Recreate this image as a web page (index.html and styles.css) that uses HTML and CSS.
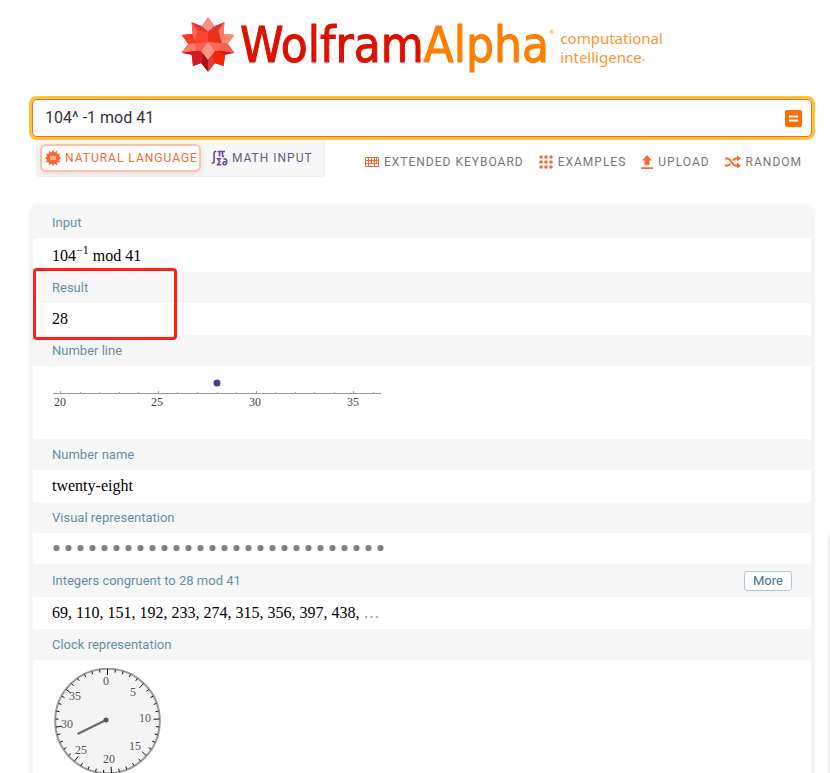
FILE: index.html
```html
<!DOCTYPE html>
<html lang="en">
<head>
<meta charset="utf-8">
<title>104^ -1 mod 41 - Wolfram|Alpha</title>
<link rel="stylesheet" href="styles.css">
</head>
<body>
<div class="page">
  <header class="brand">
    <svg class="spikey" viewBox="11 9 160 165" aria-hidden="true">
      <path fill="#e63322" d="M91 10 110 37 140 25 138 60 170 63 150 89 170 116 142 122 138 156 112 148 91 173 70 148 46 156 42 122 12 116 32 89 12 63 45 60 42 25 73 37Z"/>
      <path fill="#ff9082" d="M91 10 110 37 91 54 73 37Z"/>
      <path fill="#dc3a2c" d="M42 25 73 37 91 54 60 50Z"/>
      <path fill="#f76455" d="M42 25 60 50 52 84 45 60Z"/>
      <path fill="#dc3a2c" d="M140 25 110 37 91 54 122 50Z"/>
      <path fill="#ff7565" d="M140 25 122 50 131 84 138 60Z"/>
      <path fill="#ff4530" d="M60 50 91 54 91 83 52 88Z"/>
      <path fill="#e8301c" d="M122 50 91 54 91 83 131 88Z"/>
      <path fill="#fa3a22" d="M12 63 45 60 52 88 32 90Z"/>
      <path fill="#ff8a7a" d="M170 63 138 60 131 88 150 90Z"/>
      <path fill="#ff7a6a" d="M12 116 32 89 52 88 58 110Z"/>
      <path fill="#cc1824" d="M12 116 58 110 62 122 42 122Z"/>
      <path fill="#f56555" d="M170 116 150 89 131 88 124 110Z"/>
      <path fill="#d21818" d="M170 116 124 110 120 122 142 122Z"/>
      <path fill="#ff5f4c" d="M52 88 91 83 75 112 58 110Z"/>
      <path fill="#ff6a58" d="M131 88 91 83 107 112 124 110Z"/>
      <path fill="#ff9385" d="M91 83 111 112 91 139 71 112Z"/>
      <path fill="#d01c26" d="M46 156 42 122 58 110 71 112 76 126 72 146Z"/>
      <path fill="#f52208" d="M138 156 142 122 124 110 111 112 106 126 110 146Z"/>
      <path fill="#aa101a" d="M91 173 72 148 76 119 91 139Z"/>
      <path fill="#df3a35" d="M91 173 110 148 106 119 91 139Z"/>
    </svg>
    <div class="wordmark">Wolfram<span class="alpha">Alpha</span><sup class="reg">®</sup></div>
    <div class="tagline">computational<br>intelligence<span class="tm">™</span></div>
  </header>

  <main>
    <form class="search" onsubmit="return false">
      <input class="query" type="text" aria-label="Query" value="104^ -1 mod 41">
      <button class="compute" type="submit" aria-label="Compute">
        <svg viewBox="0 0 17 17" width="17" height="17"><rect width="17" height="17" rx="2" fill="#ff6f00"/><path d="M4 6.5h9M4 10.5h9" stroke="#fff" stroke-width="2"/></svg>
      </button>
    </form>

    <div class="toolbar">
      <div class="modes">
        <button class="mode mode-active" type="button">
          <svg viewBox="0 0 16 16" width="16" height="16" aria-hidden="true"><path fill="#f96932" d="M8 0l1.500 2.500L12 .8l.3 2.900 2.900.1-1.200 2.500L16 8l-2 1.700 1.200 2.500-2.900.1-.3 2.900-2.500-1.500L8 16l-1.500-2.300L4 15.200l-.3-2.900-2.900-.1L2 9.700 0 8l2-1.700L.8 3.800l2.900-.1L4 .8l2.500 1.700z"/><rect x="5" y="6" width="6" height="4" fill="#ffad8d"/></svg>
          NATURAL LANGUAGE
        </button>
        <button class="mode mode-math" type="button">
          <svg viewBox="0 0 17 16" width="17" height="16" aria-hidden="true"><g fill="none" stroke="#6b4f91" stroke-width="1.600"><path d="M5.200 1.700C3.800 1 3.100 1.700 3.100 3.200v8c0 1.800-1 2.200-2.500 1.500"/><path d="M6.500 1.500h7.500M8.500 1.500v5M11.500 1.500v4q0 1 1.500.8"/><path d="M10.200 8.800H6.700l2 3-2 3h3.500"/><path d="M12.500 9.300c2-1 3.500.2 3.300 2.400-.2 2-1 3-2.200 3-2 0-2-3 0-3q1.500 0 2 .8"/></g></svg>
          MATH INPUT
        </button>
      </div>
      <nav class="tools">
        <a class="tool" href="#"><svg viewBox="0 0 14 10" width="14" height="10" aria-hidden="true"><path fill="none" stroke="#f96932" d="M.5.500h13v9H.5zM.5 3.500h13M.5 6.500h13M3.500.500v9M6.500.500v6M9.500.500v9M11.500.500v6"/></svg>EXTENDED KEYBOARD</a>
        <a class="tool" href="#"><svg viewBox="0 0 14 14" width="14" height="14" aria-hidden="true"><path stroke="#f96932" stroke-width="3.600" stroke-linecap="round" d="M2 2h.01M7 2h.01M12 2h.01M2 7h.01M7 7h.01M12 7h.01M2 12h.01M7 12h.01M12 12h.01"/></svg>EXAMPLES</a>
        <a class="tool" href="#"><svg viewBox="0 0 12 14" width="12" height="14" aria-hidden="true"><path fill="#f96932" d="M6 0l5 5.500H8.500V10h-5V5.500H1zM0 12.200h12V14H0z"/></svg>UPLOAD</a>
        <a class="tool" href="#"><svg viewBox="0 0 16 14" width="16" height="14" aria-hidden="true"><path fill="none" stroke="#f96932" stroke-width="2" d="M0 3.500h2.500c3 0 5 7 8 7H13M0 10.500h2.500c1.200 0 2.200-1 3-2M8 5.500c.8-1.200 1.700-2 2.800-2H13"/><path fill="#f96932" d="M12 .500l4 3-4 3zM12 7.500l4 3-4 3z"/></svg>RANDOM</a>
      </nav>
    </div>

    <div class="results">
      <section>
        <h2>Input</h2>
        <div class="pod pod-input">104<sup>−1</sup> mod 41</div>
      </section>
      <section class="marked">
        <h2>Result</h2>
        <div class="pod">28</div>
      </section>
      <section>
        <h2>Number line</h2>
        <div class="pod pod-line">
          <svg width="330" height="50" viewBox="0 0 330 50" role="img" aria-label="Number line with 28 marked">
            <path stroke="#999" d="M1 20.500h328M8.500 18v3M106.500 18v3M204.500 18v3M301.500 18v3"/>
            <path stroke="#aaa" d="M28.500 19v2M47.500 19v2M67.500 19v2M86.500 19v2M125.500 19v2M145.500 19v2M165.500 19v2M184.500 19v2M223.500 19v2M243.500 19v2M262.500 19v2M282.500 19v2M321.500 19v2"/>
            <circle cx="165" cy="10" r="3.500" fill="#3f3d99"/>
            <g class="scale"><text x="8" y="33">20</text><text x="105" y="33">25</text><text x="203" y="33">30</text><text x="301" y="33">35</text></g>
          </svg>
        </div>
      </section>
      <section>
        <h2>Number name</h2>
        <div class="pod">twenty-eight</div>
      </section>
      <section>
        <h2>Visual representation</h2>
        <div class="pod pod-dots">
          <svg width="336" height="8" viewBox="0 0 336 8" role="img" aria-label="28 dots"><path stroke="#808080" stroke-width="6.200" stroke-linecap="round" stroke-dasharray="0.01 11.99" d="M4.500 4H329"/></svg>
        </div>
      </section>
      <section>
        <div class="head"><h2>Integers congruent to 28 mod 41</h2><button class="more" type="button">More</button></div>
        <div class="pod">69, 110, 151, 192, 233, 274, 315, 356, 397, 438, <span class="dim">…</span></div>
      </section>
      <section>
        <h2>Clock representation</h2>
        <div class="pod pod-clock">
          <svg id="clock" width="110" height="110" viewBox="0 0 110 110" role="img" aria-label="Clock with 41 divisions pointing at 28">
            <circle cx="55.500" cy="53" r="52.300" fill="#f4f4f4" stroke="#999" stroke-width="2"/>
            <g id="ticks" stroke="#111"></g>
            <path d="M54 52 25.500 66" stroke="#666" stroke-width="2"/>
            <circle cx="54" cy="52" r="2.500" fill="#555"/>
            <g class="hours"><text x="54" y="17">0</text><text x="81" y="28">5</text><text x="93" y="54">10</text><text x="83" y="82">15</text><text x="57" y="95">20</text><text x="29" y="86">25</text><text x="15" y="60">30</text><text x="23" y="32">35</text></g>
          </svg>
        </div>
      </section>
    </div>
  </main>
  <aside class="side-tab"></aside>
</div>
<script src="clock.js"></script>
</body>
</html>
```

FILE: styles.css
```css
*, ::before, ::after { box-sizing: border-box; }
body { margin: 0; background: #fff; font-family: Roboto, sans-serif; }
button { font-family: inherit; cursor: pointer; }

.page {
  position: relative;
  height: 100vh;
  overflow: hidden;
  padding: 0 18px 0 32px;
}

.brand {
  display: flex;
  justify-content: center;
  height: 99px;
  padding-top: 17px;
}
.spikey { width: 54px; height: 55px; margin-right: 5px; flex: none; }
.wordmark {
  font-family: "DejaVu Sans Condensed", "DejaVu Sans", sans-serif;
  font-size: 49px;
  line-height: 58px;
  color: #dd1100;
  -webkit-text-stroke: 1px currentColor;
  white-space: nowrap;
}
.alpha { color: #ff7f00; }
.reg { font-size: 6px; line-height: 6px; color: #ff7f00; vertical-align: 28px; -webkit-text-stroke: 0; }
.tagline {
  margin: 12px 0 0 6px;
  font-family: "Noto Sans", sans-serif;
  font-size: 15px;
  line-height: 19px;
  color: #ff9433;
}
.tm { font-size: 5px; }

.search {
  display: flex;
  align-items: center;
  height: 38px;
  border: 1px solid #f96932;
  border-radius: 5px;
  box-shadow: 0 0 0 3px #ffc230;
  background: #fff;
  position: relative;
  z-index: 1;
}
.query {
  flex: 1;
  min-width: 0;
  padding: 0 12px;
  border: 0;
  outline: 0;
  background: none;
  font: 16px/24px Roboto, sans-serif;
  color: #333;
}
.compute { display: flex; margin-right: 9px; padding: 0; border: 0; background: none; }

.toolbar { display: flex; justify-content: space-between; padding: 0 10px 0 4px; }
.modes {
  display: flex;
  gap: 4px;
  height: 40px;
  padding: 6px 5px 4px 3px;
  border: 1px solid #eee;
  border-radius: 0 0 4px 4px;
  background: #f7f7f7;
}
.mode {
  display: flex;
  align-items: center;
  gap: 4px;
  height: 28px;
  padding: 0 4px;
  border: 2px solid transparent;
  border-radius: 6px;
  background: none;
  font-size: 12px;
  letter-spacing: 1px;
  color: #f96932;
  white-space: nowrap;
}
.mode-active { padding: 0 1px 0 3px; border-color: #ffc1ab; background: #fff; box-shadow: 0 2px 6px #ddd; }
.mode-math { color: #65598b; }
.tools { display: flex; align-items: center; gap: 15px; padding-top: 10px; }
.tool {
  display: flex;
  align-items: center;
  gap: 5px;
  font-size: 12px;
  letter-spacing: 1px;
  color: #777;
  text-decoration: none;
  white-space: nowrap;
}

.results {
  margin-top: 30px;
  padding: 0 1px;
  border-radius: 6px 6px 0 0;
  background: #f7f7f7;
  box-shadow: 0 0 6px #e2e2e2;
}
section { position: relative; }
h2 {
  height: 31px;
  margin: 0;
  padding: 0 19px;
  font-size: 13px;
  font-weight: 400;
  line-height: 32px;
  color: #678fa2;
}
.head { display: flex; align-items: center; justify-content: space-between; height: 33px; padding-right: 19px; }
.more {
  width: 48px;
  height: 20px;
  padding: 0;
  border: 1px solid #a9cdd9;
  border-radius: 3px;
  background: #fff;
  font-size: 13px;
  line-height: 18px;
  color: #41759a;
}
.pod {
  height: 32px;
  padding: 0 19px;
  background: #fff;
  font-family: "Liberation Serif", serif;
  font-size: 16px;
  line-height: 32px;
  color: #000;
}
.pod svg { display: block; }
.pod-input { height: 34px; line-height: 36px; border-radius: 4px 0 0 0; }
.pod-input sup { font-size: 12px; line-height: 12px; vertical-align: 7px; }
.pod-line { height: 73px; padding-top: 7px; }
.pod-dots { height: 31px; padding-top: 11px; }
.pod-clock { height: auto; padding-top: 8px; }
.dim { color: #999; }
.scale { font-size: 12px; fill: #444; text-anchor: middle; }
.hours { font-size: 12px; fill: #555; text-anchor: middle; }

.marked::after {
  content: "";
  position: absolute;
  z-index: 1;
  top: -4px;
  left: 0;
  width: 144px;
  height: 72px;
  border: 3px solid #ff2015;
  border-radius: 4px;
}

.side-tab {
  position: absolute;
  top: 536px;
  right: -10px;
  bottom: 0;
  width: 10px;
  box-shadow: 0 0 4px #ccc;
}
```

FILE: clock.js
```js
// One tick per residue modulo 41, with a longer one at every fifth.
const ticks = document.getElementById("ticks");
for (let i = 0; i < 41; i++) {
  const line = document.createElementNS("http://www.w3.org/2000/svg", "line");
  const angle = (i / 41) * 2 * Math.PI;
  const inner = i % 5 === 0 && i < 40 ? 46 : 49;
  line.setAttribute("x1", 55.5 + inner * Math.sin(angle));
  line.setAttribute("y1", 53 - inner * Math.cos(angle));
  line.setAttribute("x2", 55.5 + 52 * Math.sin(angle));
  line.setAttribute("y2", 53 - 52 * Math.cos(angle));
  ticks.appendChild(line);
}
```
